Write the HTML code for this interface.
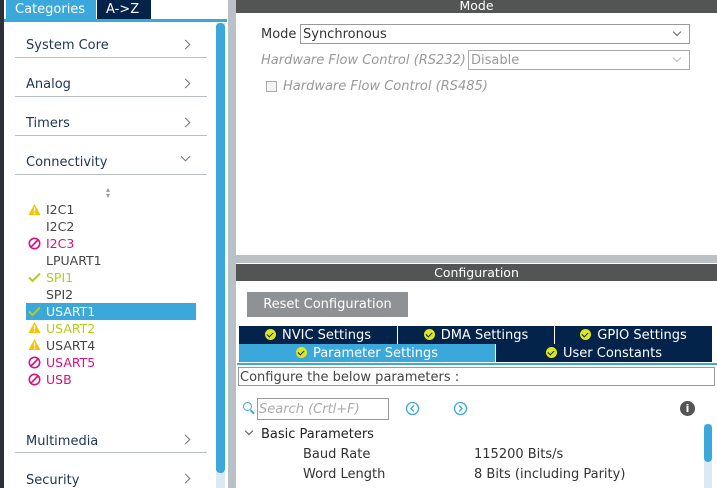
<!DOCTYPE html>
<html><head><style>
*{margin:0;padding:0;box-sizing:border-box}
body{width:717px;height:488px;overflow:hidden;background:#b9c1c6;font-family:"DejaVu Sans","Liberation Sans",sans-serif;font-size:13px;color:#333;position:relative}
.abs{position:absolute}
.cat{position:absolute;left:26px;font-size:13px;color:#1e3553}
.line{position:absolute;left:15px;width:192px;height:1px;background:#b8bec4}
.chev{position:absolute;left:182px;width:7px;height:7px;border-right:1.3px solid #777;border-top:1.3px solid #777;transform:rotate(45deg)}
.it{position:absolute;left:46px;font-size:12.5px}
.ic{position:absolute;left:28px;width:13px;height:13px}
.tab{position:absolute;background:#03234b;color:#fff;font-size:13px;text-align:center;height:18px;line-height:19px}
.ok{display:inline-block;width:11px;height:11px;border-radius:50%;background:#dfe61c;vertical-align:-1px;margin-right:6px;position:relative}
.ok:after{content:"";position:absolute;left:3px;top:2px;width:3px;height:5px;border-right:1.5px solid #03234b;border-bottom:1.5px solid #03234b;transform:rotate(45deg)}
</style></head><body>
<div class="abs" style="left:0;top:0;width:4px;height:488px;background:#2d3135"></div>
<div class="abs" style="left:4px;top:0;width:224px;height:488px;background:#fff"></div>
<div class="abs" style="left:6px;top:0;width:90px;height:19px;background:#3ba8dc;color:#fff;font-size:13px;line-height:19px;padding-left:9px">Categories</div>
<div class="abs" style="left:97px;top:0;width:54px;height:19px;background:#03234b;color:#fff;font-size:13px;line-height:19px;padding-left:9px">A-&gt;Z</div>
<div class="abs" style="left:4px;top:19px;width:223px;height:3px;background:#3ba8dc"></div>
<div class="abs" style="left:216px;top:23px;width:9px;height:465px;background:#dce9f4"></div>
<div class="abs" style="left:216px;top:23px;width:9px;height:450px;background:#3ba8dc;border-radius:4px"></div>
<div class="cat" style="top:38px">System Core</div><div class="chev" style="top:41px"></div><div class="line" style="top:57px"></div>
<div class="cat" style="top:77px">Analog</div><div class="chev" style="top:80px"></div><div class="line" style="top:96px"></div>
<div class="cat" style="top:116px">Timers</div><div class="chev" style="top:119px"></div><div class="line" style="top:135px"></div>
<div class="cat" style="top:155px">Connectivity</div><div class="chev" style="top:153px;transform:rotate(135deg)"></div><div class="line" style="top:174px"></div>
<div class="abs" style="left:106px;top:187px;font-size:8px;color:#999;line-height:6px">▴<br>▾</div>
<svg class="ic" style="top:203px" viewBox="0 0 13 13"><path d="M6.5 1L12.5 12H0.5Z" fill="#f5c400"/><rect x="5.8" y="4.5" width="1.4" height="4" fill="#fff"/><rect x="5.8" y="9.5" width="1.4" height="1.4" fill="#fff"/></svg>
<div class="it" style="top:202px;color:#444">I2C1</div>
<div class="it" style="top:219px;color:#444">I2C2</div>
<svg class="ic" style="top:237px" viewBox="0 0 13 13"><circle cx="6.5" cy="6.5" r="5.2" fill="none" stroke="#d9107f" stroke-width="1.6"/><path d="M3 10L10 3" stroke="#d9107f" stroke-width="1.6"/></svg>
<div class="it" style="top:236px;color:#d9107f">I2C3</div>
<div class="it" style="top:253px;color:#444">LPUART1</div>
<svg class="ic" style="top:271px" viewBox="0 0 13 13"><path d="M1 6.5L4.5 10L12 2.5" fill="none" stroke="#b4cc1a" stroke-width="2"/></svg>
<div class="it" style="top:270px;color:#b4cc1a">SPI1</div>
<div class="it" style="top:287px;color:#444">SPI2</div>
<div class="abs" style="left:26px;top:303px;width:170px;height:17px;background:#3ba8dc"></div>
<svg class="ic" style="top:305px" viewBox="0 0 13 13"><path d="M1 6.5L4.5 10L12 2.5" fill="none" stroke="#b4cc1a" stroke-width="2"/></svg>
<div class="it" style="top:304px;color:#fff">USART1</div>
<svg class="ic" style="top:321px" viewBox="0 0 13 13"><path d="M6.5 1L12.5 12H0.5Z" fill="#f5c400"/><rect x="5.8" y="4.5" width="1.4" height="4" fill="#fff"/><rect x="5.8" y="9.5" width="1.4" height="1.4" fill="#fff"/></svg>
<div class="it" style="top:321px;color:#b4cc1a">USART2</div>
<svg class="ic" style="top:338px" viewBox="0 0 13 13"><path d="M6.5 1L12.5 12H0.5Z" fill="#f5c400"/><rect x="5.8" y="4.5" width="1.4" height="4" fill="#fff"/><rect x="5.8" y="9.5" width="1.4" height="1.4" fill="#fff"/></svg>
<div class="it" style="top:338px;color:#444">USART4</div>
<svg class="ic" style="top:356px" viewBox="0 0 13 13"><circle cx="6.5" cy="6.5" r="5.2" fill="none" stroke="#d9107f" stroke-width="1.6"/><path d="M3 10L10 3" stroke="#d9107f" stroke-width="1.6"/></svg>
<div class="it" style="top:355px;color:#d9107f">USART5</div>
<svg class="ic" style="top:373px" viewBox="0 0 13 13"><circle cx="6.5" cy="6.5" r="5.2" fill="none" stroke="#d9107f" stroke-width="1.6"/><path d="M3 10L10 3" stroke="#d9107f" stroke-width="1.6"/></svg>
<div class="it" style="top:372px;color:#d9107f">USB</div>
<div class="cat" style="top:434px">Multimedia</div><div class="chev" style="top:436px"></div><div class="line" style="top:452px"></div>
<div class="cat" style="top:473px">Security</div><div class="chev" style="top:475px"></div>

<div class="abs" style="left:236px;top:0;width:481px;height:255px;background:#fff"></div>
<div class="abs" style="left:236px;top:0;width:481px;height:13px;background:#535555;color:#fff;text-align:center;font-size:12.5px;line-height:12px">Mode</div>
<div class="abs" style="left:261px;top:27px">Mode</div>
<div class="abs" style="left:300px;top:24px;width:390px;height:20px;border:1px solid #999;padding-left:2px;line-height:20px">Synchronous</div>
<div class="chev" style="left:674px;top:29px;transform:rotate(135deg);width:6px;height:6px;border-color:#666"></div>
<div class="abs" style="left:261px;top:53px;color:#999;font-style:italic">Hardware Flow Control (RS232)</div>
<div class="abs" style="left:468px;top:50px;width:222px;height:20px;border:1px solid #aaa;padding-left:2px;line-height:20px;color:#999">Disable</div>
<div class="chev" style="left:674px;top:55px;transform:rotate(135deg);width:6px;height:6px;border-color:#bbb"></div>
<div class="abs" style="left:266px;top:81px;width:11px;height:11px;border:1px solid #aaa;background:#f4f4f4"></div>
<div class="abs" style="left:283px;top:79px;color:#999;font-style:italic">Hardware Flow Control (RS485)</div>

<div class="abs" style="left:236px;top:263px;width:481px;height:225px;background:#fff"></div>
<div class="abs" style="left:236px;top:264px;width:481px;height:17px;background:#535555;color:#fff;text-align:center;font-size:12.5px;line-height:17px">Configuration</div>
<div class="abs" style="left:247px;top:292px;width:161px;height:25px;background:#8e9294;color:#fff;text-align:center;line-height:26px">Reset Configuration</div>
<div class="tab" style="left:239px;top:326px;width:158px"><span class="ok"></span>NVIC Settings</div>
<div class="tab" style="left:398px;top:326px;width:156px"><span class="ok"></span>DMA Settings</div>
<div class="tab" style="left:555px;top:326px;width:157px"><span class="ok"></span>GPIO Settings</div>
<div class="tab" style="left:239px;top:344px;width:256px;background:#3ba8dc"><span class="ok"></span>Parameter Settings</div>
<div class="tab" style="left:496px;top:344px;width:216px"><span class="ok"></span>User Constants</div>
<div class="abs" style="left:237px;top:363px;width:480px;height:2px;background:#3ba8dc"></div>
<div class="abs" style="left:238px;top:367px;width:477px;height:19px;border:1px solid #999;line-height:19px;padding-left:1px;color:#444">Configure the below parameters :</div>
<div class="abs" style="left:243px;top:402px;width:9px;height:9px;border:1.5px solid #3ba8dc;border-radius:50%"></div>
<div class="abs" style="left:250px;top:411px;width:5px;height:1.5px;background:#3ba8dc;transform:rotate(45deg)"></div>
<div class="abs" style="left:257px;top:398px;width:132px;height:22px;border:1px solid #999;color:#aaa;font-style:italic;line-height:22px;padding-left:1px">Search (Crtl+F)</div>
<svg class="abs" style="left:405px;top:401px" width="15" height="15" viewBox="0 0 15 15"><circle cx="7.5" cy="7.5" r="6" fill="none" stroke="#3ba8dc" stroke-width="1.3"/><path d="M8.8 4.5L6 7.5L8.8 10.5" fill="none" stroke="#3ba8dc" stroke-width="1.3"/></svg>
<svg class="abs" style="left:453px;top:401px" width="15" height="15" viewBox="0 0 15 15"><circle cx="7.5" cy="7.5" r="6" fill="none" stroke="#3ba8dc" stroke-width="1.3"/><path d="M6.2 4.5L9 7.5L6.2 10.5" fill="none" stroke="#3ba8dc" stroke-width="1.3"/></svg>
<div class="abs" style="left:680px;top:401px;width:15px;height:15px;border-radius:50%;background:#555;color:#fff;font-size:11px;font-weight:bold;text-align:center;line-height:15px">i</div>
<div class="chev" style="left:246px;top:428px;transform:rotate(135deg);width:6px;height:6px;border-color:#555"></div>
<div class="abs" style="left:261px;top:427px;color:#222">Basic Parameters</div>
<div class="abs" style="left:303px;top:447px;color:#333">Baud Rate</div>
<div class="abs" style="left:474px;top:447px;color:#333">115200 Bits/s</div>
<div class="abs" style="left:303px;top:467px;color:#333">Word Length</div>
<div class="abs" style="left:474px;top:467px;color:#333">8 Bits (including Parity)</div>
<div class="abs" style="left:704px;top:424px;width:8px;height:64px;background:#dce9f4"></div>
<div class="abs" style="left:704px;top:424px;width:8px;height:38px;background:#3ba8dc;border-radius:4px"></div>
</body></html>
